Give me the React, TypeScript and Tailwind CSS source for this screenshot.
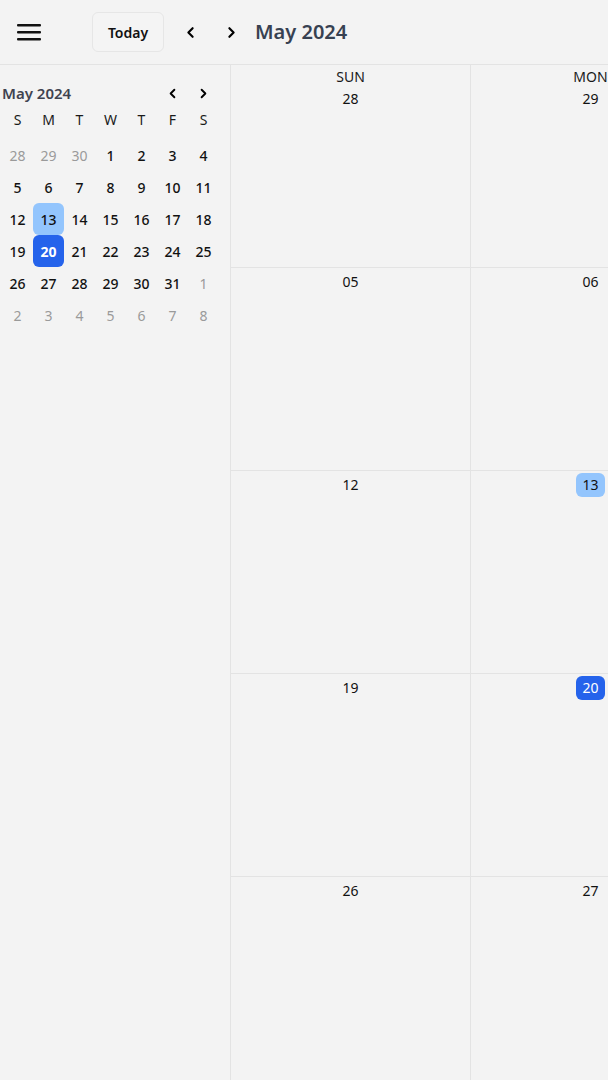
import { ChevronLeft, ChevronRight } from 'lucide-react';
import React from 'react';

const font = { fontFamily: '"Noto Sans", "Open Sans", sans-serif' };

const weekLetters = ['S', 'M', 'T', 'W', 'T', 'F', 'S'];
const weekNames = ['SUN', 'MON', 'TUE', 'WED', 'THU', 'FRI', 'SAT'];

// mini calendar: Apr 28 .. Jun 8
const miniDays = (() => {
  const out: { d: number; muted: boolean }[] = [];
  for (const d of [28, 29, 30]) out.push({ d, muted: true });
  for (let d = 1; d <= 31; d++) out.push({ d, muted: false });
  for (let d = 1; d <= 8; d++) out.push({ d, muted: true });
  return out;
})();

const monthWeeks = [
  [28, 29, 30, 1, 2, 3, 4],
  [5, 6, 7, 8, 9, 10, 11],
  [12, 13, 14, 15, 16, 17, 18],
  [19, 20, 21, 22, 23, 24, 25],
  [26, 27, 28, 29, 30, 31, 1],
];

const MenuIcon = () => (
  <svg width="24" height="18" viewBox="0 0 24 18" fill="none">
    <rect x="0" y="1" width="24" height="2.4" rx="1" fill="#111" />
    <rect x="0" y="8" width="24" height="2.4" rx="1" fill="#111" />
    <rect x="0" y="15" width="24" height="2.4" rx="1" fill="#111" />
  </svg>
);

const MiniCalendar: React.FC = () => (
  <div className="pl-[2px] pt-[17px] w-[219px]">
    <div className="flex items-center justify-between h-[22px]">
      <span className="text-[15px] font-semibold text-[#3f4350]">May 2024</span>
      <div className="flex">
        <button className="w-[31px] flex justify-center text-black">
          <ChevronLeft size={15} strokeWidth={3} />
        </button>
        <button className="w-[31px] flex justify-center text-black">
          <ChevronRight size={15} strokeWidth={3} />
        </button>
      </div>
    </div>
    <div className="grid grid-cols-7 h-[30px] items-center">
      {weekLetters.map((l, i) => (
        <span key={i} className="text-center text-[14px] text-[#1a1a1a]">{l}</span>
      ))}
    </div>
    <div className="grid grid-cols-7 mt-[5px]">
      {miniDays.map((day, i) => {
        const sel = !day.muted && day.d === 20;
        const hl = !day.muted && day.d === 13;
        return (
          <div key={i} className="h-8 flex items-center justify-center">
            <span
              className={
                'w-[31px] h-8 flex items-center justify-center rounded-md text-[14px] ' +
                (sel
                  ? 'bg-[#2563eb] text-white font-bold'
                  : hl
                  ? 'bg-[#93c5fd] text-[#111] font-medium'
                  : day.muted
                  ? 'text-[#9a9a9a]'
                  : 'text-[#111] font-medium')
              }
            >
              {day.d}
            </span>
          </div>
        );
      })}
    </div>
  </div>
);

const pad = (n: number) => (n < 10 ? '0' + n : String(n));

const App: React.FC = () => {
  return (
    <div className="h-screen w-full flex flex-col bg-[#f3f3f3] overflow-hidden" style={font}>
      {/* Top bar */}
      <header className="h-[65px] shrink-0 flex items-center border-b border-[#e3e3e3]">
        <button className="ml-[17px] flex items-center">
          <MenuIcon />
        </button>
        <button className="ml-[51px] w-[72px] h-10 rounded-md border border-[#e6e6e6] bg-[#f4f4f4] text-[14px] font-semibold text-[#111]">
          Today
        </button>
        <button className="ml-[10px] w-8 h-8 flex items-center justify-center text-black">
          <ChevronLeft size={17} strokeWidth={3} />
        </button>
        <button className="ml-[9px] w-8 h-8 flex items-center justify-center text-black">
          <ChevronRight size={17} strokeWidth={3} />
        </button>
        <h1 className="ml-[8px] text-[20px] font-semibold text-[#374151]">May 2024</h1>
      </header>

      <div className="flex flex-1 min-h-0">
        <aside className="w-[231px] shrink-0 border-r border-[#e3e3e3]">
          <MiniCalendar />
        </aside>

        <main className="flex-1 min-w-0 overflow-hidden">
          <div className="grid grid-cols-[repeat(7,240px)] grid-rows-5 h-full w-max">
            {monthWeeks.map((week, wi) =>
              week.map((d, di) => {
                const isSel = wi === 3 && di === 1;
                const isHl = wi === 2 && di === 1;
                return (
                  <div
                    key={wi + '-' + di}
                    className={
                      'flex flex-col items-center pt-[2px] border-r border-[#e3e3e3] ' +
                      (wi < 4 ? 'border-b' : '')
                    }
                  >
                    {wi === 0 && (
                      <span className="h-5 leading-5 text-[14px] text-[#1a1a1a]">{weekNames[di]}</span>
                    )}
                    <span
                      className={
                        'px-1.5 py-0.5 leading-5 rounded-md text-[14px] ' +
                        (isSel
                          ? 'bg-[#2563eb] text-white'
                          : isHl
                          ? 'bg-[#93c5fd] text-[#111]'
                          : 'text-[#111]')
                      }
                    >
                      {pad(d)}
                    </span>
                  </div>
                );
              })
            )}
          </div>
        </main>
      </div>
    </div>
  );
};

export default App;
